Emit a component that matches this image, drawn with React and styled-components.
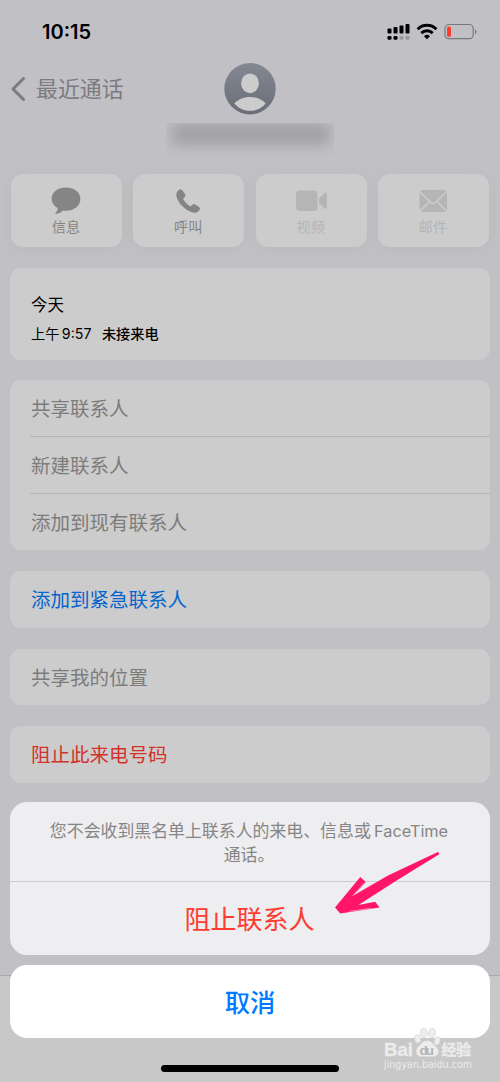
import React from 'react'
import styled, { createGlobalStyle } from 'styled-components';

const GlobalStyle = createGlobalStyle`
  * {
    box-sizing: border-box;
  }
  body {
    margin: 0;
    background: #c1c0c5;
    font-family: Inter, "Noto Sans CJK SC", sans-serif;
    overflow: hidden;
  }
  svg {
    display: block;
    overflow: visible;
  }
`;

const actions = [
  { label: '信息', icon: 'message' },
  { label: '呼叫', icon: 'phone' },
  { label: '视频', icon: 'video', disabled: true },
  { label: '邮件', icon: 'mail', disabled: true },
];

const groups = [
  { rows: ['共享联系人', '新建联系人', '添加到现有联系人'], color: '#7c7c7c' },
  { rows: ['添加到紧急联系人'], color: '#0565cd' },
  { rows: ['共享我的位置'], color: '#7c7c7c' },
  { rows: ['阻止此来电号码'], color: '#d2322b' },
];

const ActionIcon = ({ name }) => {
  if (name === 'message') {
    return (
      <svg width="30" height="28" viewBox="0 0 30 28" fill="currentColor">
        <path d="M15 .6C7 .6.6 5.400.6 11.800c0 4 2.300 7.200 6 9.300.3 1.500-.5 3.200-2 4.600-.6.600-.2 1.200.6 1.100 2.800-.2 5-1.500 6.900-3.300.9.150 1.900.2 2.900.2 8 0 14.400-5.200 14.400-11.800S23 .6 15 .6z" />
      </svg>
    );
  }
  if (name === 'phone') {
    return (
      <svg width="24" height="24" viewBox="0 0 24 24" fill="currentColor">
        <path d="M3.400.8C1.600 1.700.3 3.400.3 5.400c0 4 2.900 8.700 6.500 12.200 3.500 3.500 8.100 6.100 12 6.100 2.300 0 4.200-1.400 5-3.300.4-1 .1-1.700-.8-2.300l-3.800-2.600c-1-.7-1.900-.5-2.700.2l-1.400 1.300c-.4.4-.9.400-1.400.1-1.300-.8-2.500-1.900-3.600-3.100C9 12.900 8 11.700 7.400 10.600c-.3-.5-.2-1 .2-1.400l1.300-1.400c.7-.8.8-1.700.1-2.700L6.300 1.300C5.500.2 4.500.2 3.400.8z" />
      </svg>
    );
  }
  if (name === 'video') {
    return (
      <svg width="31" height="22" viewBox="0 0 31 22" fill="currentColor">
        <rect x="1" y=".5" width="21.500" height="20.500" rx="3.800" />
        <path d="M24 8.200l5.600-5.100c1-.9 2.200-.4 2.200.8v13.700c0 1.200-1.200 1.700-2.200.8L24 13.300z" />
      </svg>
    );
  }
  return (
    <svg width="28" height="22" viewBox="0 0 28 22">
      <rect x=".5" y="0" width="27.500" height="22" rx="3" fill="currentColor" />
      <path d="M0 1L12 12.500c1.300 1.200 3.100 1.200 4.400 0L28.500 1M.5 21.500l10-10M28 21.500l-10-10" fill="none" stroke="#ccc" strokeWidth="1.700" />
    </svg>
  );
};

const StatusIcons = () => (
  <svg width="90" height="18" viewBox="387 23 90 18">
    <g fill="#000">
      <rect x="387.500" y="28.500" width="4" height="5" rx="1" />
      <rect x="393.500" y="27" width="4" height="6.500" rx="1" />
      <rect x="399.500" y="25.500" width="4" height="8" rx="1" />
      <rect x="405.500" y="24" width="4" height="9.500" rx="1" />
      <rect x="387.500" y="36" width="4" height="3.800" rx="1.200" />
      <rect x="393.500" y="36" width="4" height="3.800" rx="1.200" />
    </g>
    <g fill="#9a999d">
      <rect x="399.500" y="36" width="4" height="3.800" rx="1.200" />
      <rect x="405.500" y="36" width="4" height="3.800" rx="1.200" />
    </g>
    <g fill="none" stroke="#000" strokeWidth="2.900">
      <path d="M417.600 29.200a13.300 13.300 0 0 1 18.800 0" />
      <path d="M421.300 33.100a8.200 8.200 0 0 1 11.400 0" />
    </g>
    <path d="M424 36.200a4.400 4.400 0 0 1 6 0l-3 3z" fill="#000" />
    <rect x="445" y="24.500" width="28.200" height="14.200" rx="4" fill="none" stroke="#79787c" strokeWidth="1.200" />
    <rect x="447" y="26.500" width="4" height="10.300" rx="1.500" fill="#ff3b30" />
    <path d="M475 29.200c2 1 2 4 0 5z" fill="#79787c" />
  </svg>
);

const Arrow = () => (
  <svg width="106" height="64" viewBox="334 851 106 64">
    <path
      d="M335 907.500L360.300 877 365.800 882 353 895.800 388 875.500 437.300 852.200Q439.500 851.800 439.200 854.200L395 881.500 358.500 905 375.200 901.800 379.500 907.500 340.300 913.500z"
      fill="#ff1668"
    />
    <path d="M364.500 882.500l-12 13.500M349 911.300l22-3" stroke="#f3dfe8" strokeWidth=".5" fill="none" />
  </svg>
);

const Avatar = () => (
  <svg width="52" height="52" viewBox="0 0 52 52">
    <defs>
      <linearGradient id="avatarFill" x1="0" y1="0" x2="0" y2="1">
        <stop offset="0" stopColor="#848893" />
        <stop offset="1" stopColor="#696d76" />
      </linearGradient>
    </defs>
    <circle cx="26" cy="25.700" r="25.700" fill="url(#avatarFill)" />
    <ellipse cx="26" cy="20.300" rx="8.900" ry="9.900" fill="#ccc" />
    <path d="M10.300 40.500C14 36.500 19.500 34 26 34s12 2.500 15.700 6.500C38 45 32.500 47.800 26 47.800S14 45 10.300 40.500z" fill="#ccc" />
  </svg>
);

const App = () => {
  return (
    <Screen>
      <GlobalStyle />
      <StatusBar>
        <Time>10:15</Time>
        <StatusIcons />
      </StatusBar>
      <Header>
        <Back>
          <svg width="14" height="24" viewBox="0 0 14 24">
            <path d="M12.500 1.500L2 12l10.500 10.500" fill="none" stroke="#7c7c7e" strokeWidth="3" strokeLinecap="round" strokeLinejoin="round" />
          </svg>
          <span>最近通话</span>
        </Back>
        <Avatar />
      </Header>
      <HiddenName><Smudge /></HiddenName>
      <Actions>
        {actions.map((a) => (
          <Action key={a.label} $disabled={a.disabled}>
            <IconSlot><ActionIcon name={a.icon} /></IconSlot>
            {a.label}
          </Action>
        ))}
      </Actions>
      <CallCard>
        <Day>今天</Day>
        <CallLine><span>上午 9:57</span><b>未接来电</b></CallLine>
      </CallCard>
      {groups.map((g) => (
        <Group key={g.rows[0]}>
          {g.rows.map((row) => <Row key={row} $color={g.color}>{row}</Row>)}
        </Group>
      ))}
      <TabBar />
      <Sheet>
        <SheetCard>
          <Message><p>您不会收到黑名单上联系人的来电、信息或 <span>FaceTime</span></p><p>通话。</p></Message>
          <Block>阻止联系人</Block>
        </SheetCard>
        <Cancel>取消</Cancel>
        <HomeBar />
      </Sheet>
      <ArrowLayer><Arrow /></ArrowLayer>
      <Watermark>
        <svg width="90" height="46" viewBox="0 0 90 46">
          <g fill="#ededed" stroke="#cfcfcf" strokeWidth=".6">
            <ellipse cx="33.500" cy="14" rx="3" ry="4.200" transform="rotate(-15 33.500 14)" />
            <ellipse cx="39.700" cy="8" rx="3.400" ry="4.800" />
            <ellipse cx="47.900" cy="8.300" rx="3.400" ry="4.800" transform="rotate(12 47.900 8.300)" />
            <ellipse cx="53.200" cy="16" rx="2.900" ry="4.200" transform="rotate(15 53.200 16)" />
            <path d="M43 15.500c4.500 0 6 3.500 9 6 4.500 4 2.500 10.300-3 10.300H37.500c-5.500 0-7.500-6.300-3-10.300 3-2.500 4-6 8.500-6z" />
          </g>
          <g fontFamily="Liberation Sans, sans-serif" fontWeight="700" fill="#ececec" stroke="#ececec" strokeWidth=".3">
            <text x="0" y="30.700" fontSize="19" textLength="29" lengthAdjust="spacingAndGlyphs">Bai</text>
            <text x="35.500" y="29.700" fontSize="13.500" textLength="14.500" fill="#b5b5b5" stroke="none">du</text>
            <text x="57.300" y="29.500" fontSize="15.200" textLength="30" fontFamily="Noto Sans CJK SC, sans-serif">经验</text>
          </g>
          <text x="0" y="43" fontSize="9.800" textLength="88" lengthAdjust="spacingAndGlyphs" fontFamily="DejaVu Sans, sans-serif" fill="#ececec">jingyan.baidu.com</text>
        </svg>
      </Watermark>
    </Screen>
  );
};

const Screen = styled.div`
  position: relative;
  display: flex;
  flex-direction: column;
  width: 500px;
  height: 1082px;
  background: #c1c0c5;
  overflow: hidden;
`;

const StatusBar = styled.div`
  display: flex;
  justify-content: space-between;
  align-items: center;
  height: 63px;
  padding: 0 23px 0 42px;
`;

const Time = styled.div`
  font-size: 20px;
  font-weight: 600;
  color: #000;
`;

const Header = styled.div`
  display: grid;
  grid-template-columns: 1fr 52px 1fr;
  align-items: center;
  height: 52px;
  padding: 0 11px;
`;

const Back = styled.div`
  display: flex;
  align-items: center;
  gap: 11px;
  font-size: 21.900px;
  line-height: 32px;
  color: #7c7c7e;
  span {
    padding-bottom: 1px;
  }
`;

const HiddenName = styled.div`
  align-self: center;
  width: 168px;
  height: 34px;
  margin: 8px 0 0;
  overflow: hidden;
`;

const Smudge = styled.div`
  width: 158px;
  height: 22px;
  margin-left: 6px;
  background: #a1a1a3;
  filter: blur(7px);
`;

const Actions = styled.div`
  display: flex;
  gap: 11.500px;
  padding: 17px 11px 0;
`;

const Action = styled.div`
  display: flex;
  flex: 1;
  flex-direction: column;
  align-items: center;
  height: 73px;
  padding: 12px 1px 0 0;
  border-radius: 12px;
  background: #ccc;
  box-shadow: 0 2px 18px rgba(0, 0, 0, 0.035);
  font-size: 14.200px;
  line-height: 22px;
  color: ${props => props.$disabled ? '#b5b5b5' : '#858585'};
`;

const IconSlot = styled.div`
  display: flex;
  align-items: center;
  justify-content: center;
  height: 30px;
`;

const CallCard = styled.div`
  height: 91.500px;
  margin: 21px 10px 0;
  padding: 25px 21px 0;
  border-radius: 11px;
  background: #ccc;
  color: #000;
`;

const Day = styled.div`
  font-size: 16.500px;
  line-height: 24px;
`;

const CallLine = styled.div`
  display: flex;
  gap: 10.500px;
  margin-top: 6px;
  font-size: 14.200px;
  line-height: 22px;
  span {
    word-spacing: -1.500px;
  }
  b {
    font-weight: 500;
  }
`;

const Group = styled.div`
  margin: 20.800px 10px 0;
  border-radius: 11px;
  background: #ccc;
  overflow: hidden;
`;

const Row = styled.div`
  height: 56.700px;
  margin-left: 20px;
  padding-left: 1px;
  font-size: 19.500px;
  line-height: 59.500px;
  color: ${props => props.$color};
  &:not(:last-child) {
    border-bottom: 1px solid #b6b6b8;
  }
`;

const TabBar = styled.div`
  position: absolute;
  left: 0;
  right: 0;
  bottom: 0;
  height: 107px;
  border-top: 1px solid #aaa9ac;
  background: #c8c8c8;
`;

/* action sheet lies over the contact page */
const Sheet = styled.div`
  position: absolute;
  left: 10px;
  right: 10px;
  bottom: 10px;
  display: flex;
  flex-direction: column;
`;

const SheetCard = styled.div`
  height: 153px;
  border-radius: 17px;
  background: #eeedef;
  overflow: hidden;
`;

const Message = styled.div`
  height: 80px;
  padding-top: 18px;
  border-bottom: 1px solid #cbcbce;
  font-size: 16.900px;
  line-height: 23.500px;
  text-align: center;
  color: #858586;
  p {
    margin: 0;
    padding-right: 2px;
    white-space: nowrap;
    word-spacing: -1.500px;
  }
  span {
    font-size: 16.300px;
  }
`;

const Block = styled.div`
  padding-right: 1px;
  font-size: 26px;
  line-height: 75px;
  text-align: center;
  color: #ff3b30;
`;

const Cancel = styled.div`
  height: 73px;
  margin-top: 10px;
  border-radius: 17px;
  background: #fff;
  font-size: 25.300px;
  font-weight: 500;
  line-height: 76px;
  text-align: center;
  color: #007aff;
`;

const HomeBar = styled.div`
  align-self: center;
  width: 178px;
  height: 7px;
  margin-top: 27px;
  border-radius: 4px;
  background: #000;
`;

const ArrowLayer = styled.div`
  position: absolute;
  left: 334px;
  top: 851px;
`;

const Watermark = styled.div`
  position: absolute;
  left: 384px;
  top: 1025px;
`;

export default App;
